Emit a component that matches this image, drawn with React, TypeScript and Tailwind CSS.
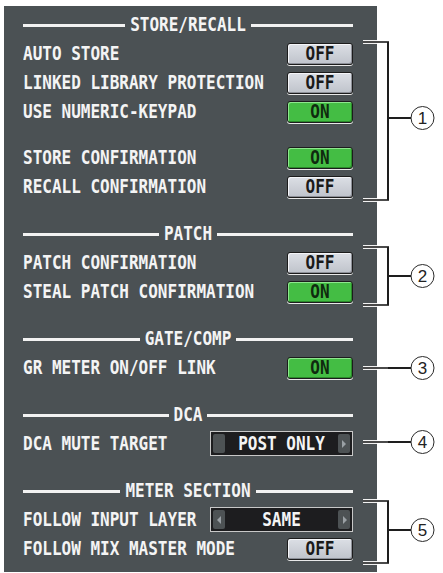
const mono = "font-['DejaVu_Sans_Mono',monospace] font-bold";

const Txt = ({ children, className = "" }: { children: React.ReactNode; className?: string }) => (
  <span className={`${mono} inline-block scale-y-[1.2] text-[16px] leading-none whitespace-pre ${className}`}>{children}</span>
);

const Header = ({ title }: { title: string }) => (
  <div className="flex h-[20px] items-center gap-[5px]">
    <div className="h-[3px] flex-1 bg-[#f2f2f2]" />
    <Txt className="text-[#f4f4f4]">{title}</Txt>
    <div className="h-[3px] flex-1 bg-[#f2f2f2]" />
  </div>
);

const Toggle = ({ on }: { on: boolean }) =>
  on ? (
    <div className="flex h-[22px] w-[66px] items-center justify-center rounded-[3px] border border-[#1c1c1c] bg-[#44bd44] shadow-[inset_1px_1px_0_#8ee68e,inset_-1px_-1px_0_#2a8a2a,0_1px_0_#e8e8e8]">
      <Txt className="text-[#0f2a0f]">ON</Txt>
    </div>
  ) : (
    <div className="flex h-[22px] w-[66px] items-center justify-center rounded-[3px] border border-[#1c1c1c] bg-gradient-to-b from-[#dcdfe5] to-[#bfc3cb] shadow-[inset_1px_1px_0_#f4f5f8,inset_-1px_-1px_0_#8d9098,0_1px_0_#e8e8e8]">
      <Txt className="text-[#1a1a1a]">OFF</Txt>
    </div>
  );

const Arrow = ({ dir, show }: { dir: "l" | "r"; show: boolean }) => (
  <div className="flex h-[19px] w-[12px] items-center justify-center rounded-[2px] bg-[#4d5254]">
    {show && (
      <svg width="5" height="8" viewBox="0 0 5 8">
        <path d={dir === "l" ? "M4 0 L0 4 L4 8 Z" : "M1 0 L5 4 L1 8 Z"} fill="#9aa0a4" />
      </svg>
    )}
  </div>
);

const Selector = ({ value, left }: { value: string; left: boolean }) => (
  <div className="flex h-[25px] w-[143px] items-center justify-between border border-[#c8c8c8] bg-[#1d1d1f] px-[2px]">
    <Arrow dir="l" show={left} />
    <Txt className="text-[#f4f4f4]">{value}</Txt>
    <Arrow dir="r" show />
  </div>
);

const Row = ({ label, children }: { label: string; children: React.ReactNode }) => (
  <div className="flex h-[29px] items-center justify-between">
    <Txt className="text-[#f4f4f4]">{label}</Txt>
    {children}
  </div>
);

const callouts = [
  { n: "1", top: 42, bottom: 200, mid: 118 },
  { n: "2", top: 247, bottom: 305, mid: 276 },
  { n: "3", top: 368, bottom: 368, mid: 368 },
  { n: "4", top: 442, bottom: 442, mid: 442 },
  { n: "5", top: 501, bottom: 563, mid: 530 },
];

const Callouts = () => (
  <svg className="pointer-events-none absolute left-0 top-0" width="443" height="573" viewBox="0 0 443 573">
    {callouts.map((c) => {
      const ys = c.top === c.bottom ? [c.top] : [c.top, c.bottom];
      return (
        <g key={c.n}>
          {ys.map((y) => (
            <line key={`w${y}`} x1="363" y1={y} x2="377" y2={y} stroke="#f2f2f2" strokeWidth="4" />
          ))}
          {ys.map((y) => (
            <line key={`b${y}`} x1="363" y1={y} x2="389" y2={y} stroke="#1e1e1e" strokeWidth="1.6" />
          ))}
          {c.top !== c.bottom && <line x1="388" y1={c.top} x2="388" y2={c.bottom} stroke="#1e1e1e" strokeWidth="2" />}
          <line x1="388" y1={c.mid} x2="411" y2={c.mid} stroke="#1e1e1e" strokeWidth="2" />
          <circle cx="422.5" cy={c.mid} r="11.5" fill="white" stroke="#2a2a2a" strokeWidth="1" />
          <text
            x="422.5"
            y={c.mid + 6}
            textAnchor="middle"
            fontSize="17"
            fontFamily="'Liberation Sans', sans-serif"
            fill="#222"
          >
            {c.n}
          </text>
        </g>
      );
    })}
  </svg>
);

export default function App() {
  return (
    <div className="relative h-[573px] w-[443px] overflow-hidden bg-white">
      <div className="ml-[4px] mt-[6px] flex h-[566px] w-[373px] flex-col bg-[#4b5154] pl-[19px] pr-[24px] pt-[9px]">
        <Header title="STORE/RECALL" />
        <div className="mt-[4px]">
          <Row label="AUTO STORE"><Toggle on={false} /></Row>
          <Row label="LINKED LIBRARY PROTECTION"><Toggle on={false} /></Row>
          <Row label="USE NUMERIC-KEYPAD"><Toggle on /></Row>
          <div className="h-[17px]" />
          <Row label="STORE CONFIRMATION"><Toggle on /></Row>
          <Row label="RECALL CONFIRMATION"><Toggle on={false} /></Row>
        </div>

        <div className="mt-[23px]">
          <Header title="PATCH" />
        </div>
        <div className="mt-[4px]">
          <Row label="PATCH CONFIRMATION"><Toggle on={false} /></Row>
          <Row label="STEAL PATCH CONFIRMATION"><Toggle on /></Row>
        </div>

        <div className="mt-[23px]">
          <Header title="GATE/COMP" />
        </div>
        <div className="mt-[4px]">
          <Row label="GR METER ON/OFF LINK"><Toggle on /></Row>
        </div>

        <div className="mt-[23px]">
          <Header title="DCA" />
        </div>
        <div className="mt-[4px]">
          <Row label="DCA MUTE TARGET"><Selector value="POST ONLY" left={false} /></Row>
        </div>

        <div className="mt-[23px]">
          <Header title="METER SECTION" />
        </div>
        <div className="mt-[4px]">
          <Row label="FOLLOW INPUT LAYER"><Selector value="SAME" left /></Row>
          <Row label="FOLLOW MIX MASTER MODE"><Toggle on={false} /></Row>
        </div>
      </div>
      <Callouts />
    </div>
  );
}
